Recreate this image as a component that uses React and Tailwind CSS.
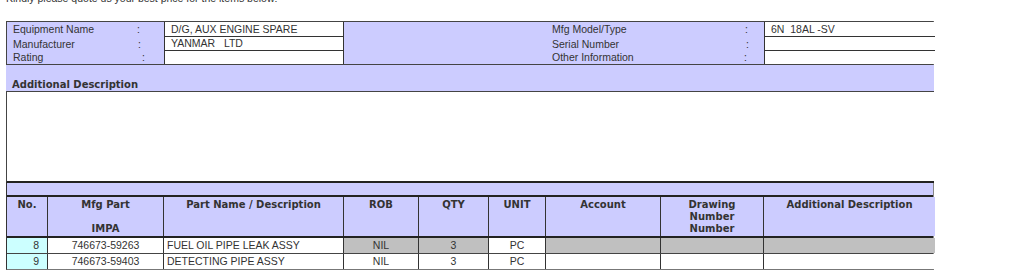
const LAV = 'bg-[#ccccff]'

const ITEMS = [
  { no: 8, part: '746673-59263', name: 'FUEL OIL PIPE LEAK ASSY', rob: 'NIL', qty: 3, unit: 'PC', grey: true },
  { no: 9, part: '746673-59403', name: 'DETECTING PIPE ASSY', rob: 'NIL', qty: 3, unit: 'PC', grey: false },
]

const COLS = 'grid grid-cols-[41px_116px_180px_75px_70px_57px_115px_103px_171px]'

// one row of the equipment block: label / value / label / value
function InfoRow({ left, leftColon, value, right, rightValue, h, last }) {
  const line = last ? '' : 'border-b border-[#333]'
  return (
    <>
      <div className={`${LAV} ${h} flex items-center pl-[6px]`}>
        <span className={leftColon}>{left}</span>
        <span>:</span>
      </div>
      <div className={`bg-white ${h} flex items-center pl-[6px] whitespace-pre border-l border-r border-[#333] ${line}`}>
        {value}
      </div>
      <div className={`${LAV} ${h} flex items-center pl-[208px]`}>
        <span className={right.w}>{right.text}</span>
        <span>:</span>
      </div>
      <div className={`bg-white ${h} flex items-center pl-[6px] whitespace-pre border-l border-[#333] ${line}`}>
        {rightValue}
      </div>
    </>
  )
}

function HeadCell({ children, className = '' }) {
  return (
    <div className={`${LAV} border-r border-[#333] pt-[2px] text-center leading-[12px] font-bold font-['DejaVu_Sans',sans-serif] text-[10px] ${className}`}>
      {children}
    </div>
  )
}

export default function App() {
  return (
    <div className="w-[1024px] h-[278px] overflow-hidden bg-white text-[#333] text-[10.5px] font-['Liberation_Sans',Arial,sans-serif]">
      <p className="mt-[-8px] h-[13px] leading-[13px] pl-[6px]">
        Kindly please quote us your best price for the items below:
      </p>

      <div className="ml-[6px] w-[928px] mt-[16px]">
        {/* equipment block */}
        <div className="grid grid-cols-[157px_180px_420px_171px] border border-[#444] border-r-[#888] leading-[13px]">
          <InfoRow left="Equipment Name" leftColon="w-[124px]" value="D/G, AUX ENGINE SPARE" h="h-[15px]"
            right={{ text: 'Mfg Model/Type', w: 'w-[193px]' }} rightValue="6N  18AL -SV" />
          <InfoRow left="Manufacturer" leftColon="w-[125px]" value="YANMAR   LTD" h="h-[14px]"
            right={{ text: 'Serial Number', w: 'w-[194px]' }} rightValue="" />
          <InfoRow left="Rating" leftColon="w-[129px]" value="" h="h-[13px]"
            right={{ text: 'Other Information', w: 'w-[192px]' }} rightValue="" last />
        </div>

        <div className={`${LAV} h-[26px] flex items-end pl-[6px] leading-[10px] pb-[1px] font-bold font-['DejaVu_Sans',sans-serif] text-[10px]`}>
          Additional Description
        </div>
        <div className="h-[92px] bg-white border-t border-l border-[#444] border-b-2 border-b-[#222]" />

        {/* items */}
        <div className="border-l border-[#333] border-r border-r-[#888] border-b border-b-[#777]">
          <div className={`${LAV} h-[14px] border-b-2 border-[#222]`} />
          <div className={`${COLS} h-[41px] border-b-2 border-[#222]`}>
            <HeadCell>No.</HeadCell>
            <HeadCell>Mfg Part<br /><br />IMPA</HeadCell>
            <HeadCell>Part Name / Description</HeadCell>
            <HeadCell>ROB</HeadCell>
            <HeadCell>QTY</HeadCell>
            <HeadCell>UNIT</HeadCell>
            <HeadCell>Account</HeadCell>
            <HeadCell>Drawing<br />Number<br />Number</HeadCell>
            <HeadCell className="border-r-0">Additional Description</HeadCell>
          </div>
          {ITEMS.map((it, i) => {
            const g = it.grey ? 'bg-[#c0c0c0]' : 'bg-white'
            const row = i === 0 ? 'border-b border-[#444]' : ''
            const cell = 'h-[15px] leading-[15px] border-r border-[#333]'
            return (
              <div key={it.no} className={`${COLS} ${row}`}>
                <div className={`${cell} bg-[#ccffff] text-right pr-[8px]`}>{it.no}</div>
                <div className={`${cell} bg-white text-center`}>{it.part}</div>
                <div className={`${cell} bg-white pl-[3px]`}>{it.name}</div>
                <div className={`${cell} ${g} text-center`}>{it.rob}</div>
                <div className={`${cell} ${g} text-center`}>{it.qty}</div>
                <div className={`${cell} bg-white text-center`}>{it.unit}</div>
                <div className={`${cell} ${g}`} />
                <div className={`${cell} ${g}`} />
                <div className={`h-[15px] ${g}`} />
              </div>
            )
          })}
        </div>
      </div>
    </div>
  )
}
